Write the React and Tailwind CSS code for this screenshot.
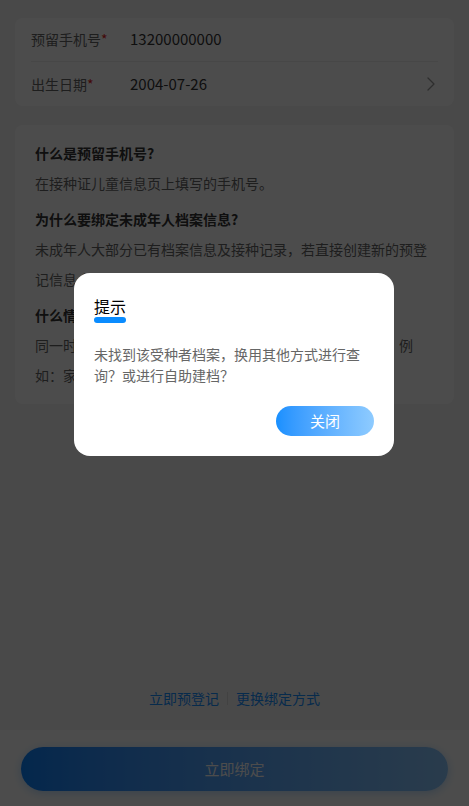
import React from "react";

function Chevron() {
  return (
    <svg width="8" height="14" viewBox="0 0 8 14" className="mr-[3px]">
      <polyline points="1,1 7,7 1,13" fill="none" stroke="#999" strokeWidth="1.3" strokeLinecap="round" strokeLinejoin="round" />
    </svg>
  );
}

export default function App() {
  return (
    <div className="relative w-full h-[806px] bg-[#f5f5f5] flex flex-col font-['Noto_Sans_CJK_SC',sans-serif] overflow-hidden">
      <div className="flex-1 px-[15px] pt-[18px]">
        <div className="bg-white rounded-lg px-4">
          <div className="h-[44px] flex items-center border-b border-[#eeeeee]">
            <div className="w-[99px] text-[14px] text-[#666]">
              预留手机号<span className="text-[#e02020]">*</span>
            </div>
            <div className="text-[15px] text-[#333]">13200000000</div>
          </div>
          <div className="h-[44px] flex items-center">
            <div className="w-[99px] text-[14px] text-[#666]">
              出生日期<span className="text-[#e02020]">*</span>
            </div>
            <div className="flex-1 text-[15px] text-[#333]">2004-07-26</div>
            <Chevron />
          </div>
        </div>

        <div className="mt-[19px] bg-white rounded-lg px-5 pt-[13px] pb-[14px] text-[14px] leading-[30px]">
          <div className="font-bold text-[#333]">什么是预留手机号?</div>
          <div className="text-[#666]">在接种证儿童信息页上填写的手机号。</div>
          <div className="mt-[6px] font-bold text-[#333]">为什么要绑定未成年人档案信息?</div>
          <div className="text-[#666]">
            未成年人大部分已有档案信息及接种记录，若直接创建新的预登记信息会导致重复建档。
          </div>
          <div className="mt-[6px] font-bold text-[#333]">什么情况下会查询不到档案信息?</div>
          <div className="text-[#666]">
            同一时间段内存在多个档案信息，或档案信息有误等情况，例如：家长手机号码变更、出生日期登记错误等。
          </div>
        </div>
      </div>

      <div className="pb-[22px] flex justify-center items-center text-[14px] leading-[20px] text-[#1890ff]">
        <span>立即预登记</span>
        <span className="w-px h-[13px] bg-[#dddddd] mx-2"></span>
        <span>更换绑定方式</span>
      </div>

      <div className="h-[76px] bg-white pt-[17px] px-[21px]">
        <div className="h-[44px] rounded-full bg-linear-to-r from-[#0a84ff] to-[#8cc8ff] shadow-[0_2px_10px_rgba(24,144,255,0.3)] flex items-center justify-center text-white text-[15px]">
          立即绑定
        </div>
      </div>

      <div className="fixed inset-0 bg-black/70">
        <div className="absolute left-[74px] top-[273px] w-[320px] bg-white rounded-2xl px-5 pt-[21px] pb-5">
          <div className="inline-flex flex-col">
            <div className="text-[16px] leading-[22px] text-black">提示</div>
            <div className="h-[6px] rounded-full bg-[#0a8cff]"></div>
          </div>
          <div className="mt-[21px] text-[14px] leading-[21px] text-[#666]">
            未找到该受种者档案，换用其他方式进行查询？或进行自助建档？
          </div>
          <div className="mt-5 flex justify-end">
            <div className="w-[98px] h-[30px] rounded-full bg-linear-to-r from-[#1890ff] to-[#8ecbff] flex items-center justify-center text-white text-[15px]">
              关闭
            </div>
          </div>
        </div>
      </div>
    </div>
  );
}
